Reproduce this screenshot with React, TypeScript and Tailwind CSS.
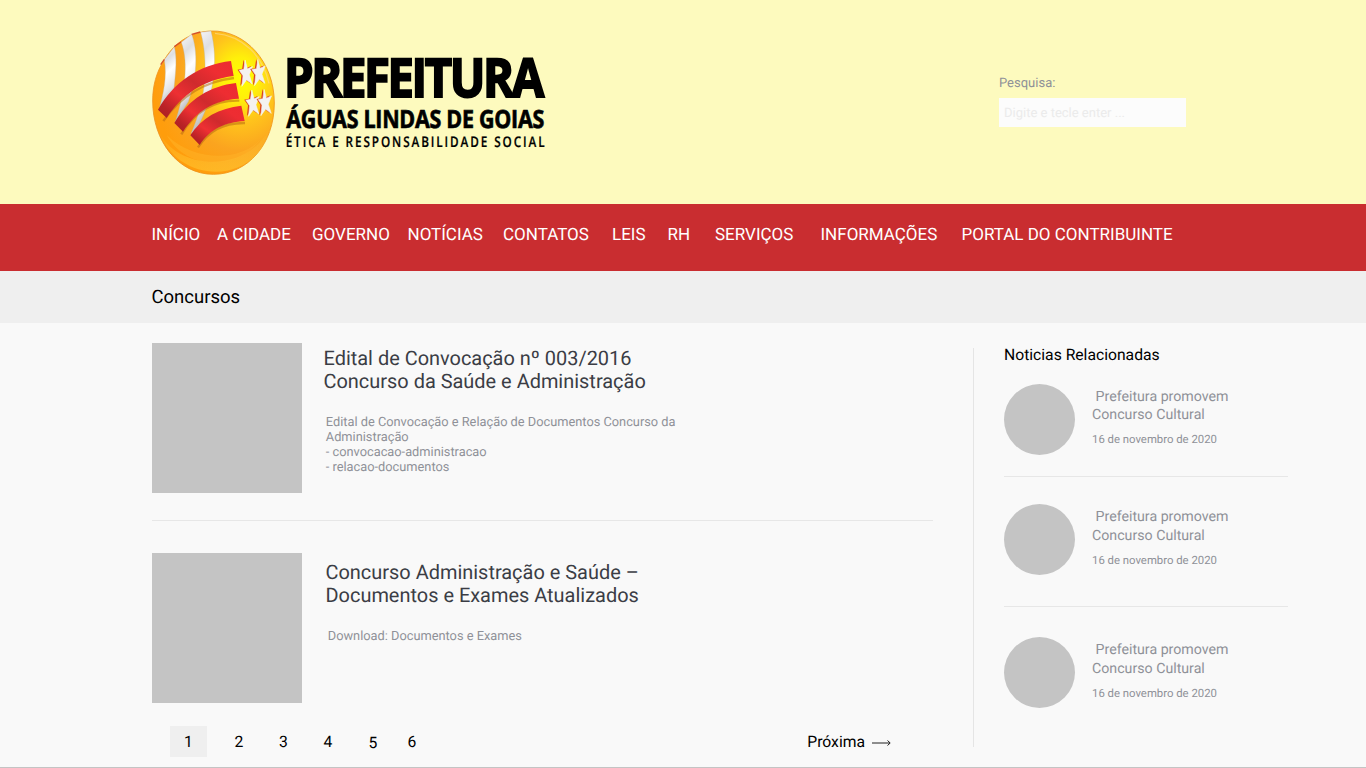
const NAV = [
  'INÍCIO',
  'A CIDADE',
  'GOVERNO',
  'NOTÍCIAS',
  'CONTATOS',
  'LEIS',
  'RH',
  'SERVIÇOS',
  'INFORMAÇÕES',
  'PORTAL DO CONTRIBUINTE',
];

const STAR = 'M-3 -28 L5 -9 L24 -14 L12 4 L23 24 L2 15 L-15 29 L-11 6 L-25 -6 L-8 -8 Z';
const STARS = [
  [318, 159],
  [356, 157],
  [338, 249],
  [375, 247],
];

function Logo() {
  return (
    <svg className="block h-[165px] w-[420px] overflow-visible" viewBox="0 0 1260 495" role="img">
      <defs>
        <radialGradient id="ball" cx="0.72" cy="0.33" r="0.72">
          <stop offset="0" stopColor="#ffff00" />
          <stop offset="0.2" stopColor="#fff00a" />
          <stop offset="0.42" stopColor="#ffc41c" />
          <stop offset="0.7" stopColor="#fba41f" />
          <stop offset="1" stopColor="#ff9d0c" />
        </radialGradient>
        <linearGradient id="rim" x1="0" y1="0" x2="1" y2="1">
          <stop offset="0" stopColor="#f39a25" />
          <stop offset="0.5" stopColor="#e88a1c" />
          <stop offset="1" stopColor="#f79c12" />
        </linearGradient>
        <linearGradient id="white" x1="0" y1="0" x2="0.25" y2="1">
          <stop offset="0" stopColor="#ffffff" />
          <stop offset="0.3" stopColor="#dedfe2" />
          <stop offset="0.5" stopColor="#ffffff" />
          <stop offset="0.78" stopColor="#e3e4e6" />
          <stop offset="1" stopColor="#a5a6aa" />
        </linearGradient>
        <linearGradient id="red" x1="0" y1="1" x2="1" y2="0">
          <stop offset="0" stopColor="#a81f23" />
          <stop offset="0.14" stopColor="#b92226" />
          <stop offset="0.34" stopColor="#ee3033" />
          <stop offset="0.55" stopColor="#cf2a2d" />
          <stop offset="0.78" stopColor="#ee2d32" />
          <stop offset="1" stopColor="#ec2c31" />
        </linearGradient>
        <linearGradient id="glow" x1="0" y1="0" x2="0" y2="1">
          <stop offset="0" stopColor="#ffe44d" stopOpacity="0" />
          <stop offset="1" stopColor="#ffd23c" stopOpacity="0.8" />
        </linearGradient>
      </defs>

      <path
        d="M71 123 C97 76 145 35 214 33 C316 30 403 126 403 249 C403 372 324 463 220 463 C113 463 38 361 38 243 C38 197 49 157 71 123 Z"
        fill="url(#ball)"
        stroke="url(#rim)"
        strokeWidth="2.5"
      />
      <path d="M54 330 C105 448 310 466 387 330 C350 494 115 500 54 330 Z" fill="url(#glow)" opacity="0.6" />
      <path d="M80 345 C140 455 302 455 365 352 C315 424 165 430 80 345 Z" fill="#ffb52b" opacity="0.45" />
      <path d="M225 40 C308 47 368 107 387 190" fill="none" stroke="#ffd57a" strokeWidth="4" opacity="0.75" />

      <path d="M73 119 L103 80 C111 112 108 150 102 205 L57 270 C70 222 82 170 73 119 Z" fill="url(#white)" stroke="#b9b2a2" strokeWidth="1" />
      <path d="M124 67 L155 43 C174 90 172 175 145 245 L106 306 C134 220 147 130 124 67 Z" fill="url(#white)" stroke="#b9b2a2" strokeWidth="1" />
      <path d="M182 37 L213 33 C235 118 226 240 158 348 L154 338 C200 240 205 120 182 37 Z" fill="url(#white)" stroke="#b9b2a2" strokeWidth="1" />
      <path d="M62 134 L73 118 M103 80 L123 66 M155 43 L181 36" stroke="#d4502a" strokeWidth="4" />

      <path d="M70 303 C120 230 194 184 282 174 M124 343 C163 276 220 240 298 242 M174 382 C205 335 246 308 315 309" fill="none" stroke="#b86b12" strokeWidth="7" opacity="0.55" />
      <path d="M54 269 C99 188 178 133 273 123 L281 168 C190 179 126 224 80 294 Z" fill="url(#red)" />
      <path d="M103 309 C145 238 211 198 288 189 L297 236 C220 240 168 275 129 335 Z" fill="url(#red)" />
      <path d="M151 346 C183 293 239 264 304 257 L314 303 C257 307 211 325 179 375 Z" fill="url(#red)" />

      {STARS.map(([x, y]) => (
        <g key={x} transform={`translate(${x} ${y}) scale(0.82 1.38)`}>
          <path d={STAR} transform="translate(-6 -1)" fill="#d9431f" />
          <path d={STAR} fill="#f4f2f0" stroke="#f4f2f0" strokeWidth="1.5" />
        </g>
      ))}

      <g fontFamily='"Open Sans", sans-serif' fill="#000">
        <text x="432" y="232" fontSize="161" fontWeight="700" letterSpacing="-8" textLength="774" lengthAdjust="spacingAndGlyphs" stroke="#000" strokeWidth="6">
          PREFEITURA
        </text>
        <text x="439" y="323" fontSize="75" fontWeight="700" letterSpacing="-1" textLength="773" lengthAdjust="spacingAndGlyphs" stroke="#000" strokeWidth="2">
          ÁGUAS LINDAS DE GOIAS
        </text>
        <text transform="translate(437 380) scale(0.8 1)" fontSize="44" fontWeight="600" textLength="971" lengthAdjust="spacing" stroke="#000" strokeWidth="0.7">
          ÉTICA E RESPONSABILIDADE SOCIAL
        </text>
      </g>
    </svg>
  );
}

function Related({ className }: { className: string }) {
  return (
    <article className={`flex h-[71.5px] gap-[17px] ${className}`}>
      <div className="size-[71px] shrink-0 rounded-full bg-[#c4c4c4]" />
      <div className="pt-[4px] text-[#8f9198]">
        <h3 className="whitespace-pre text-[14.2px] leading-[18.5px]">{' Prefeitura promovem\nConcurso Cultural'}</h3>
        <p className="mt-[7.5px] text-[11.35px] leading-[14px]">16 de novembro de 2020</p>
      </div>
    </article>
  );
}

export default function App() {
  return (
    <div className="flex h-[768px] w-[1366px] flex-col overflow-hidden border-b border-[#c4c4c4] bg-[#f9f9f9] font-['Roboto',sans-serif] text-black [text-rendering:geometricPrecision]">
      <header className="flex h-[204.4px] shrink-0 bg-[#fdfabe] pl-[140px] pt-5">
        <Logo />
        <div className="ml-[439px] pt-[56px]">
          <label htmlFor="q" className="block text-[13px] leading-[15px] text-[#8f9198]">Pesquisa:</label>
          <input
            id="q"
            placeholder="Digite e tecle enter ..."
            className="mt-[7px] block h-[29px] w-[186.5px] bg-[#fcfcfc] px-[5px] pt-[1px] text-[13px] outline-none [text-rendering:geometricPrecision] placeholder:text-[#ebebeb]"
          />
        </div>
      </header>

      <nav className="grid h-[66.6px] shrink-0 grid-cols-[65.5px_95px_95.5px_95.5px_109px_55.5px_47.5px_105.5px_141px_1fr] whitespace-nowrap bg-[#c92d30] pl-[151.5px] pt-[20.6px] text-[17px] leading-5 text-white">
        {NAV.map((n) => (
          <a key={n}>{n}</a>
        ))}
      </nav>

      <div className="h-[52px] shrink-0 bg-[#efefef] pl-[151.5px] pt-[15px]">
        <h1 className="text-[18.5px] leading-[22px]">Concursos</h1>
      </div>

      <div className="flex grow pl-[152px]">
        <main className="w-[781px] pt-[20.5px]">
          <article className="flex h-[149.5px]">
            <div className="w-[149.5px] shrink-0 bg-[#c4c4c4]" />
            <div className="pl-[22px] pt-[4px]">
              <h2 className="whitespace-pre text-[19.95px] leading-[23px] text-[#3b3d45]">{'Edital de Convocação nº 003/2016\nConcurso da Saúde e Administração'}</h2>
              <p className="mt-[22px] whitespace-pre pl-[2.3px] text-[12.8px] leading-[15px] text-[#8f9198]">
                {'Edital de Convocação e Relação de Documentos Concurso da\nAdministração\n- convocacao-administracao\n- relacao-documentos'}
              </p>
            </div>
          </article>
          <div className="mt-[27px] h-[1.5px] bg-[#e7e7e7]" />
          <article className="mt-[32px] flex h-[149.5px]">
            <div className="w-[149.5px] shrink-0 bg-[#c4c4c4]" />
            <div className="pl-[24px] pt-[8px]">
              <h2 className="whitespace-pre text-[19.95px] leading-[23px] text-[#3b3d45]">{'Concurso Administração e Saúde –\nDocumentos e Exames Atualizados'}</h2>
              <p className="mt-[22px] pl-[2.3px] text-[12.8px] leading-[15px] text-[#8f9198]">Download: Documentos e Exames</p>
            </div>
          </article>
          <div className="mt-[23px] flex h-[31px] items-center pl-[18px] text-[15.7px]">
            <span className="flex h-[31px] w-[37px] items-center justify-center bg-[#efefef]">1</span>
            <span className="ml-[27.5px] w-[44.5px]">2</span>
            <span className="w-[44.5px]">3</span>
            <span className="w-[45px]">4</span>
            <span className="w-[39px] pt-[2px]">5</span>
            <span>6</span>
            <span className="ml-auto">Próxima</span>
            <svg className="ml-[7px] mr-[42px] mt-[3px] h-[6px] w-[19px]" viewBox="0 0 19 6" fill="none" stroke="#222" strokeWidth="1">
              <path d="M0 3H18M15.5 0.5L18.2 3L15.5 5.5" />
            </svg>
          </div>
        </main>

        <aside className="ml-[40px] mt-[25px] h-[399px] w-[315px] border-l border-[#e5e5e5] pl-[30px]">
          <h2 className="text-[15.7px] leading-[14px]">Noticias Relacionadas</h2>
          <Related className="mt-[22px]" />
          <div className="mt-[20.5px] h-[1.5px] bg-[#e7e7e7]" />
          <Related className="mt-[27px]" />
          <div className="mt-[30px] h-[1.5px] bg-[#e7e7e7]" />
          <Related className="mt-[30px]" />
        </aside>
      </div>
    </div>
  );
}
